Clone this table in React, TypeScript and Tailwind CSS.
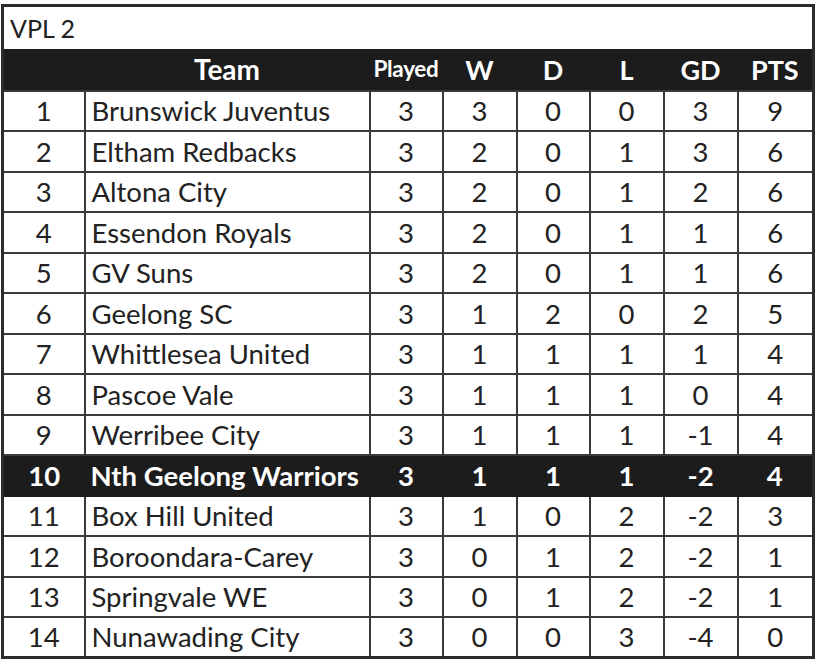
import React from "react";

type Row = [number, string, number, number, number, number, number, number];

const rows: Row[] = [
  [1, "Brunswick Juventus", 3, 3, 0, 0, 3, 9],
  [2, "Eltham Redbacks", 3, 2, 0, 1, 3, 6],
  [3, "Altona City", 3, 2, 0, 1, 2, 6],
  [4, "Essendon Royals", 3, 2, 0, 1, 1, 6],
  [5, "GV Suns", 3, 2, 0, 1, 1, 6],
  [6, "Geelong SC", 3, 1, 2, 0, 2, 5],
  [7, "Whittlesea United", 3, 1, 1, 1, 1, 4],
  [8, "Pascoe Vale", 3, 1, 1, 1, 0, 4],
  [9, "Werribee City", 3, 1, 1, 1, -1, 4],
  [10, "Nth Geelong Warriors", 3, 1, 1, 1, -2, 4],
  [11, "Box Hill United", 3, 1, 0, 2, -2, 3],
  [12, "Boroondara-Carey", 3, 0, 1, 2, -2, 1],
  [13, "Springvale WE", 3, 0, 1, 2, -2, 1],
  [14, "Nunawading City", 3, 0, 0, 3, -4, 0],
];

const HIGHLIGHT = 10;

export default function App() {
  return (
    <div className="min-h-[670px] bg-white pl-[1px] pt-[4px] text-[#222] font-['Lato',sans-serif]">
      <table className="w-[811px] table-fixed border-collapse border-[3px] border-[#2b2b2b]">
        <colgroup>
          <col className="w-[82px]" />
          <col className="w-[285px]" />
          <col className="w-[73px]" />
          <col className="w-[74px]" />
          <col className="w-[73px]" />
          <col className="w-[74px]" />
          <col className="w-[74px]" />
          <col className="w-[76px]" />
        </colgroup>
        <thead>
          <tr className="h-[43px]">
            <th colSpan={8} className="pl-[6px] pt-[2px] text-left align-middle text-[25px] font-normal leading-none">
              VPL 2
            </th>
          </tr>
          <tr className="h-[42px] bg-[#1c1c1c] text-white">
            <th />
            <th className="text-center text-[28px] font-bold leading-none">Team</th>
            <th className="text-center text-[22.5px] font-bold leading-none tracking-[-0.3px]">Played</th>
            <th className="text-center text-[27px] font-bold leading-none">W</th>
            <th className="text-center text-[27px] font-bold leading-none">D</th>
            <th className="text-center text-[27px] font-bold leading-none">L</th>
            <th className="text-center text-[27px] font-bold leading-none">GD</th>
            <th className="text-center text-[27px] font-bold leading-none">PTS</th>
          </tr>
        </thead>
        <tbody>
          {rows.map((r) => {
            const hi = r[0] === HIGHLIGHT;
            const cell = hi
              ? "border-y-2 border-[#1c1c1c] text-center"
              : "border-2 border-[#3a3a3a] text-center";
            return (
              <tr
                key={r[0]}
                className={
                  hi
                    ? "h-[40.5px] bg-[#1c1c1c] text-white font-bold text-[27.5px] leading-none"
                    : "h-[40.5px] text-[27.5px] leading-none"
                }
              >
                <td className={cell}>{r[0]}</td>
                <td className={cell + " !text-left pl-[6px] whitespace-nowrap"}>{r[1]}</td>
                {r.slice(2).map((v, i) => (
                  <td key={i} className={cell}>
                    {v}
                  </td>
                ))}
              </tr>
            );
          })}
        </tbody>
      </table>
    </div>
  );
}
